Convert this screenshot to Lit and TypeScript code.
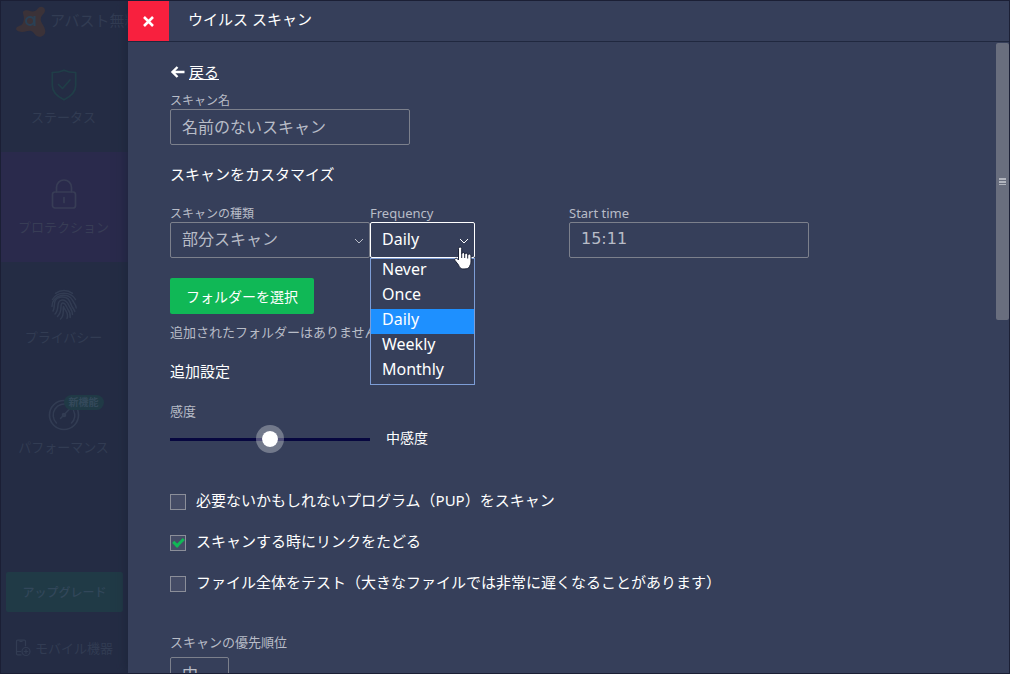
import { LitElement, html, css, svg } from "lit";
import { customElement, state } from "lit/decorators.js";
import { classMap } from "lit/directives/class-map.js";

const shieldIcon = svg`<path d="M16 1.2c-4 2-8 2.300-11.700 2.300v13c0 7 5 11 11.700 14.300c6.700-3.300 11.700-7.300 11.700-14.300v-13c-3.700 0-7.700-.3-11.700-2.300z"/><path d="M10.500 15.500l4 4 7.500-8.500"/>`;
const lockIcon = svg`<rect x="4.500" y="13" width="23" height="16" rx="2.500"/><path d="M8.500 13v-4.500a7.500 7.500 0 0 1 15 0v4.500M16 18.500v5"/>`;
const printIcon = svg`<g stroke-width="1.500"><path d="M7.500 4.300c5-3.700 12-3.700 17 0"/><path d="M4.500 10.500c4.500-8.500 18.500-8.500 23 0"/><path d="M4 17.500c-.5-12 17-15.500 21-5.500c1.400 3.500 2.700 3 3.200 7"/><path d="M5 22c3-5-1.500-12.500 8-14c8-1 9 5 10.500 8.500c.8 2 2.500 3.500 3.300 6"/><path d="M7 25c5-4.500.5-13 7-14c5.500-.5 6 4.500 8 7.500c1.500 2.500 2.500 3.500 2.500 7"/><path d="M9.500 27.500c6-5.500 1.500-12.500 5-13.500c3.500-.5 3.500 4 5.500 6.500c2 2.500 2.500 4 2.200 8"/><path d="M12.500 30c4.500-4 2-8.500 3-12.500c1 4 6 6 3.500 12"/></g>`;
const gaugeIcon = svg`<circle cx="16" cy="16" r="14.500"/><path d="M8.500 24a11 11 0 0 1 12-18M25.500 11.500a11 11 0 0 1-2 12.500M12.500 19.500l9-9.500" stroke-width="1.500"/><circle cx="16" cy="16" r="1.500" fill="currentColor"/>`;

interface NavItem {
  label: string;
  icon: unknown;
  kind?: string;
  active?: boolean;
  badge?: string;
}

const NAV: NavItem[] = [
  { label: "ステータス", icon: shieldIcon, kind: "ok" },
  { label: "プロテクション", icon: lockIcon, active: true },
  { label: "プライバシー", icon: printIcon },
  { label: "パフォーマンス", icon: gaugeIcon, badge: "新機能" },
];

const FREQUENCIES = ["Never", "Once", "Daily", "Weekly", "Monthly"];

@customElement("side-nav")
class SideNav extends LitElement {
  static styles = css`
    :host {
      display: flex;
      flex-direction: column;
      width: 127px;
      flex: none;
      overflow: hidden;
      background: #242c44;
      color: #323c53;
      font-size: 13px;
    }
    .brand {
      display: flex;
      align-items: center;
      gap: 3px;
      height: 41px;
      padding-left: 14px;
      white-space: nowrap;
      font-size: 15px;
      flex: none;
    }
    .brand-name {
      min-width: 0;
      overflow: hidden;
      line-height: 22px;
      padding-bottom: 4px;
    }
    .logo {
      width: 32px;
      height: 32px;
      flex: none;
    }
    .item {
      display: flex;
      flex-direction: column;
      align-items: center;
      gap: 6px;
      height: 110px;
      box-sizing: border-box;
      padding: 27px 2px 0 0;
      color: inherit;
      text-decoration: none;
      line-height: 20px;
    }
    .item.active {
      background: #2a2a4c;
      color: #383d56;
    }
    .icon-wrap {
      position: relative;
      height: 32px;
    }
    .icon {
      width: 32px;
      height: 32px;
      fill: none;
      stroke: currentColor;
      stroke-width: 1.7;
      stroke-linecap: round;
      stroke-linejoin: round;
    }
    .ok .icon {
      color: #203e48;
    }
    .badge {
      position: absolute;
      left: 16px;
      top: -4px;
      width: 40px;
      text-align: center;
      border-radius: 8px;
      background: #203a46;
      color: #34495b;
      font-size: 10px;
      font-weight: 700;
      line-height: 15px;
    }
    .bottom {
      margin-top: auto;
      display: flex;
      flex-direction: column;
      padding: 0 5px 14px;
      gap: 25px;
    }
    .upgrade {
      height: 40px;
      border: 0;
      border-radius: 2px;
      background: #203a46;
      color: #32475a;
      font: inherit;
      font-size: 12px;
      font-weight: 500;
    }
    .mobile {
      display: flex;
      align-items: center;
      gap: 4px;
      padding-left: 9px;
      line-height: 22px;
      color: inherit;
      text-decoration: none;
      white-space: nowrap;
    }
    .phone {
      width: 16px;
      height: 18px;
      fill: none;
      stroke: currentColor;
      stroke-width: 1.2;
    }
  `;

  render() {
    return html`
      <div class="brand">
        <svg class="logo" viewBox="0 0 32 32" aria-hidden="true">
          <path fill="#3b3238" d="M8 7.500c-.8-3 3-4 5.500-3c2.500 1 4.500 1.500 7 .3c2-1 2.500-4 5.500-4c3.500 0 5 3.500 3.300 6c-1.500 2.200-3.800 3.700-3.600 6.700c.2 4 4.300 6.500 4.600 11.500c.2 4.200-3.600 6.500-7.200 5.500c-3.500-1-4-5-7.500-5.600c-3-.5-5.500 1.500-9 1.100c-3.200-.4-6.100-1.500-5.400-3.800c.8-2.500 4.800-2 6.300-4.500c1.800-3 1.800-6.500.5-10.200z"/>
          <circle cx="15" cy="15" r="4" fill="none" stroke="#2a4055" stroke-width="2"/>
          <path d="M19.500 10v10" stroke="#2a4055" stroke-width="2"/>
        </svg>
        <span class="brand-name">アバスト無料</span>
      </div>
      <nav>
        ${NAV.map(
          (n) => html`<a href="#" class=${classMap({ item: true, active: !!n.active, ok: n.kind === "ok" })}>
            <span class="icon-wrap">
              <svg class="icon" viewBox="0 0 32 32" aria-hidden="true">${n.icon}</svg>
              ${n.badge ? html`<span class="badge">${n.badge}</span>` : null}
            </span>
            <span>${n.label}</span>
          </a>`
        )}
      </nav>
      <div class="bottom">
        <button class="upgrade">アップグレード</button>
        <a class="mobile" href="#">
          <svg class="phone" viewBox="0 0 16 18" aria-hidden="true"><path d="M6.500 15.800h-4a1 1 0 0 1-1-1v-12.600a1 1 0 0 1 1-1h7a1 1 0 0 1 1 1v5M2 12.500h4M4.500 2.500h3"/><circle cx="11" cy="12.500" r="4"/><path d="M11 10.300v4.400M8.800 12.500h4.400"/></svg>
          <span>モバイル機器</span>
        </a>
      </div>
    `;
  }
}

@customElement("app-root")
class AppRoot extends LitElement {
  @state() private frequency = "Daily";
  @state() private open = true;

  static styles = css`
    :host {
      display: flex;
      height: 100vh;
      box-sizing: border-box;
      overflow: hidden;
      border: 1px solid #1b1f35;
      background: #363f5a;
      color: #ffffff;
      font-family: "Noto Sans", "Noto Sans CJK JP", sans-serif;
      font-size: 15px;
    }
    .panel {
      position: relative;
      flex: 1;
      min-width: 0;
      display: flex;
      flex-direction: column;
      background: #363f5a;
      box-shadow: 0 0 12px #1b2338;
    }
    .bar {
      display: flex;
      align-items: center;
      gap: 19px;
      height: 40px;
      flex: none;
      border-bottom: 1px solid #20283f;
    }
    .close {
      width: 41px;
      height: 40px;
      padding: 0;
      border: 0;
      background: #f8203e;
      display: grid;
      place-items: center;
    }
    .close-icon {
      width: 11px;
      height: 11px;
      stroke: #ffffff;
      stroke-width: 2.6;
    }
    h1,
    h2,
    p {
      margin: 0;
      font-size: 15px;
      font-weight: 400;
      line-height: 20px;
    }
    h1 {
      padding-bottom: 4px;
    }
    .body {
      flex: 1;
      min-height: 0;
      display: flex;
    }
    .form {
      flex: 1;
      min-width: 0;
      overflow: hidden;
      padding: 20px 0 0 42px;
    }
    .rail {
      width: 13px;
      padding-top: 1px;
      flex: none;
    }
    .thumb {
      height: 44%;
      border-radius: 2px;
      background: #696e7e;
      display: grid;
      place-items: center;
    }
    .grip {
      width: 7px;
      height: 7px;
      background: repeating-linear-gradient(#b2b5be 0 2px, #696e7e 2px 3px);
    }
    .back {
      display: flex;
      align-items: center;
      gap: 4px;
      width: max-content;
      color: #ffffff;
      line-height: 20px;
      text-decoration: none;
    }
    .back-text {
      text-decoration: underline;
    }
    .arrow {
      width: 15px;
      height: 12px;
      fill: none;
      stroke: #ffffff;
      stroke-width: 2.4;
    }
    .label,
    .hint {
      display: block;
      color: #b8bcc7;
      font-size: 13px;
      line-height: 18px;
    }
    .small {
      padding-top: 2px;
      font-size: 12px;
      line-height: 16px;
    }
    .name {
      margin-top: 9px;
    }
    .box {
      display: block;
      box-sizing: border-box;
      height: 36px;
      width: 240px;
      padding: 0 11px 3px;
      border: 1px solid #7c808c;
      border-radius: 2px;
      outline: 0;
      background: transparent;
      color: #b8bcc7;
      font: inherit;
      font-size: 16px;
    }
    .time {
      font-family: "DejaVu Sans", sans-serif;
    }
    select.box {
      appearance: none;
      width: 100%;
    }
    .pick {
      position: relative;
    }
    .chevron {
      position: absolute;
      right: 6px;
      top: 15px;
      width: 10px;
      height: 8px;
      fill: none;
      stroke: currentColor;
      color: #b8bcc7;
      pointer-events: none;
    }
    .title {
      margin-top: 19px;
    }
    .row {
      display: grid;
      grid-template-columns: 200px 199px 240px;
      margin-top: 20px;
    }
    .freq {
      width: 105px;
    }
    .freq .box {
      border-color: #ffffff;
      color: #ffffff;
    }
    .freq .chevron {
      color: #ffffff;
    }
    .menu {
      position: absolute;
      z-index: 2;
      top: 100%;
      left: 0;
      right: 0;
      margin: 0;
      padding: 0;
      border: 1px solid #7d9dd6;
      background: #363f5a;
    }
    .option {
      display: block;
      width: 100%;
      height: 25px;
      padding: 0 11px 4px;
      border: 0;
      background: transparent;
      color: #ffffff;
      text-align: left;
      font: inherit;
      font-size: 16px;
      line-height: 21px;
    }
    .option.selected {
      background: #1e90ff;
    }
    .pointer {
      position: absolute;
      z-index: 3;
      left: 84px;
      top: 24px;
      width: 18px;
      height: 24px;
      pointer-events: none;
    }
    .choose {
      display: block;
      height: 36px;
      margin-top: 20px;
      padding: 0 16px;
      border: 0;
      border-radius: 2px;
      background: #10b856;
      color: #ffffff;
      font: inherit;
      font-size: 14px;
    }
    .hint {
      margin-top: 9px;
    }
    .extra {
      margin-top: 20px;
    }
    .sense {
      margin-top: 21px;
    }
    .slider {
      display: flex;
      align-items: center;
      gap: 16px;
      height: 28px;
      margin-top: 5px;
    }
    .range {
      appearance: none;
      width: 200px;
      height: 28px;
      margin: 0;
      background: linear-gradient(#07073f, #07073f) center / 100% 3px no-repeat;
    }
    .range::-webkit-slider-thumb {
      appearance: none;
      width: 28px;
      height: 28px;
      border: 6px solid rgba(255, 255, 255, 0.3);
      border-radius: 50%;
      background: #ffffff;
      background-clip: padding-box;
    }
    .value {
      font-size: 14px;
      line-height: 20px;
      padding-bottom: 2px;
    }
    .checks {
      display: grid;
      gap: 21px;
      margin-top: 37px;
    }
    .check {
      display: flex;
      align-items: center;
      gap: 10px;
      width: max-content;
      line-height: 20px;
    }
    .tick {
      appearance: none;
      display: grid;
      place-items: center;
      box-sizing: border-box;
      width: 16px;
      height: 16px;
      margin: 4px 0 0;
      border: 1px solid #8b8e99;
      background: #454c66;
    }
    .tick:checked::before {
      content: "";
      width: 8px;
      height: 4px;
      margin-bottom: 3px;
      border: solid #10b856;
      border-width: 0 0 3px 3px;
      transform: rotate(-45deg);
    }
    .priority {
      display: grid;
      grid-template-columns: 59px;
      gap: 6px;
      margin-top: 41px;
      white-space: nowrap;
    }
  `;

  private chevron() {
    return html`<svg class="chevron" viewBox="0 0 10 8" aria-hidden="true"><path d="M1 2l4 4 4-4"/></svg>`;
  }

  private choose(value: string) {
    this.frequency = value;
    this.open = false;
  }

  private toggle(e: Event) {
    e.preventDefault();
    this.open = !this.open;
  }

  render() {
    return html`
      <side-nav></side-nav>
      <main class="panel">
        <header class="bar">
          <button class="close" aria-label="閉じる">
            <svg class="close-icon" viewBox="0 0 11 11"><path d="M1 1l9 9M10 1l-9 9"/></svg>
          </button>
          <h1>ウイルス スキャン</h1>
        </header>
        <div class="body">
          <div class="form">
            <a class="back" href="#">
              <svg class="arrow" viewBox="0 0 15 12" aria-hidden="true"><path d="M7.500 1l-5 5 5 5M3 6h11.500"/></svg>
              <span class="back-text">戻る</span>
            </a>
            <div class="name">
              <label class="label small" for="name">スキャン名</label>
              <input class="box" id="name" type="text" value="名前のないスキャン" />
            </div>
            <h2 class="title">スキャンをカスタマイズ</h2>
            <div class="row">
              <div>
                <label class="label small" for="type">スキャンの種類</label>
                <div class="pick">
                  <select class="box" id="type"><option>部分スキャン</option></select>
                  ${this.chevron()}
                </div>
              </div>
              <div>
                <label class="label" for="freq">Frequency</label>
                <div class="pick freq">
                  <select class="box" id="freq" @mousedown=${this.toggle}>
                    ${FREQUENCIES.map((f) => html`<option ?selected=${f === this.frequency}>${f}</option>`)}
                  </select>
                  ${this.chevron()}
                  ${this.open
                    ? html`<div class="menu" role="listbox" aria-label="Frequency">
                        ${FREQUENCIES.map(
                          (f) => html`<button
                            class=${classMap({ option: true, selected: f === this.frequency })}
                            role="option"
                            aria-selected=${f === this.frequency}
                            @click=${() => this.choose(f)}
                          >${f}</button>`
                        )}
                      </div>`
                    : null}
                  <svg class="pointer" viewBox="0 0 18 24" aria-hidden="true">
                    <path fill="#ffffff" stroke="#1c2236" d="M4.500 14V2.500a1.600 1.600 0 0 1 3.200 0V8a1.500 1.500 0 0 1 3 0v.5a1.500 1.500 0 0 1 3 .3v.7a1.500 1.500 0 0 1 3.300.5v6c0 2-1 3-1.500 4.500q-.7 2.500-5.500 2.500c-4 0-4.500-2-5.500-4L1 14.500c-1-2 1.500-3 2.500-1.500z"/>
                    <path fill="none" stroke="#1c2236" d="M7.700 8v4M10.700 8.500v3.500M13.700 9.500v3"/>
                  </svg>
                </div>
              </div>
              <div>
                <label class="label" for="start">Start time</label>
                <input class="box time" id="start" type="text" value="15:11" />
              </div>
            </div>
            <button class="choose">フォルダーを選択</button>
            <p class="hint">追加されたフォルダーはありません</p>
            <h2 class="extra">追加設定</h2>
            <label class="label sense" for="sense">感度</label>
            <div class="slider">
              <input class="range" id="sense" type="range" min="0" max="2" value="1" />
              <output class="value" for="sense">中感度</output>
            </div>
            <div class="checks">
              <label class="check"><input class="tick" type="checkbox" />必要ないかもしれないプログラム（PUP）をスキャン</label>
              <label class="check"><input class="tick" type="checkbox" checked />スキャンする時にリンクをたどる</label>
              <label class="check"><input class="tick" type="checkbox" />ファイル全体をテスト（大きなファイルでは非常に遅くなることがあります）</label>
            </div>
            <div class="priority">
              <label class="label" for="prio">スキャンの優先順位</label>
              <select class="box" id="prio"><option>中</option></select>
            </div>
          </div>
          <div class="rail"><div class="thumb"><span class="grip"></span></div></div>
        </div>
      </main>
    `;
  }
}
